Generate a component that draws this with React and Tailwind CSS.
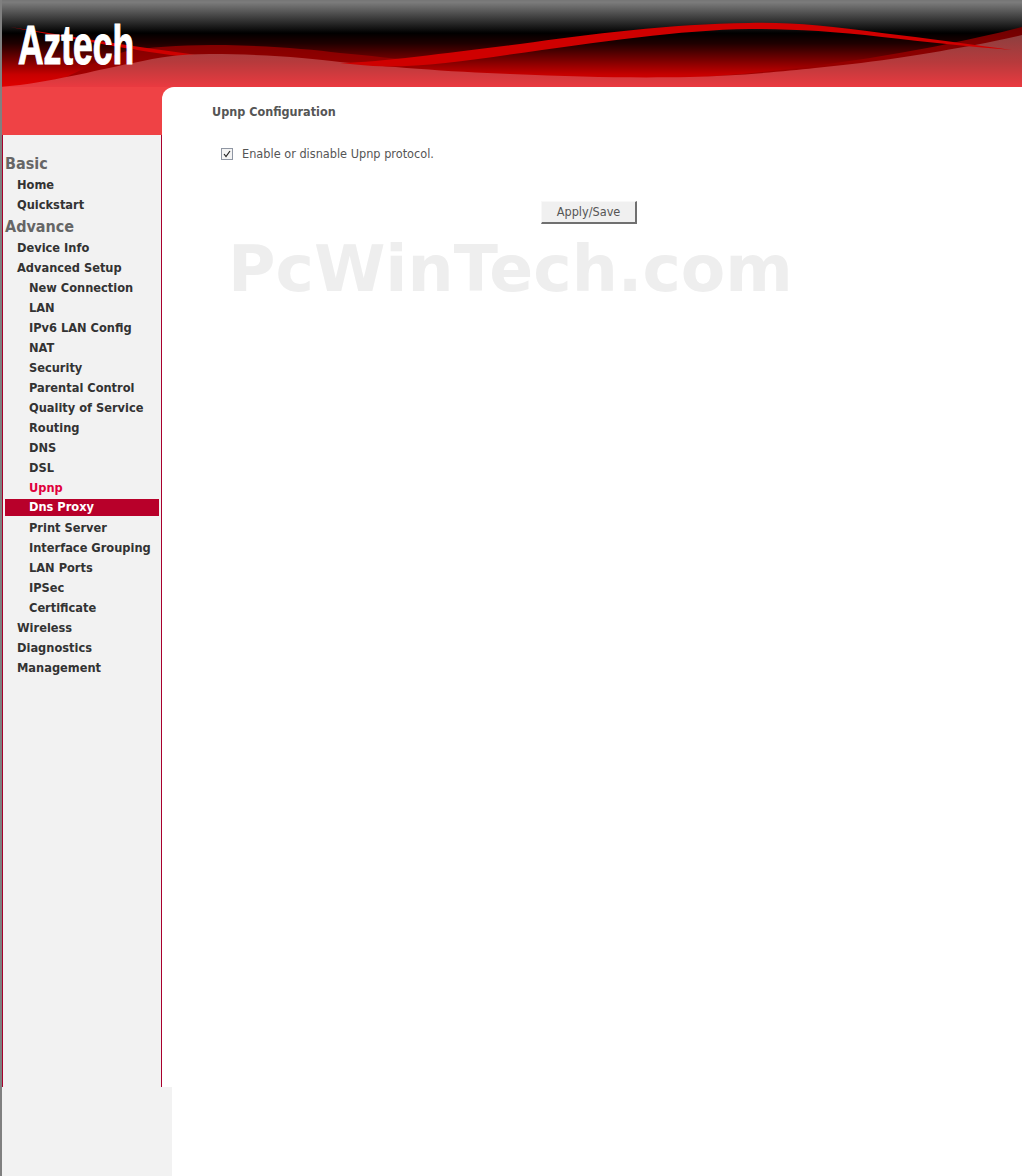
const basicItems = ['Home', 'Quickstart']

const advanceItems = [
  { label: 'Device Info', level: 1 },
  { label: 'Advanced Setup', level: 1 },
  { label: 'New Connection', level: 2 },
  { label: 'LAN', level: 2 },
  { label: 'IPv6 LAN Config', level: 2 },
  { label: 'NAT', level: 2 },
  { label: 'Security', level: 2 },
  { label: 'Parental Control', level: 2 },
  { label: 'Quality of Service', level: 2 },
  { label: 'Routing', level: 2 },
  { label: 'DNS', level: 2 },
  { label: 'DSL', level: 2 },
  { label: 'Upnp', level: 2, visited: true },
  { label: 'Dns Proxy', level: 2, hover: true },
  { label: 'Print Server', level: 2 },
  { label: 'Interface Grouping', level: 2 },
  { label: 'LAN Ports', level: 2 },
  { label: 'IPSec', level: 2 },
  { label: 'Certificate', level: 2 },
  { label: 'Wireless', level: 1 },
  { label: 'Diagnostics', level: 1 },
  { label: 'Management', level: 1 },
]

function HeaderArt() {
  return (
    <svg width="1020" height="87" viewBox="2 0 1020 87" className="block">
      <defs>
        <linearGradient id="sky" x1="0" y1="0" x2="0" y2="1">
          <stop offset="0" stopColor="#858585" />
          <stop offset="0.38" stopColor="#000000" />
          <stop offset="0.5" stopColor="#1f0000" />
          <stop offset="0.86" stopColor="#c80000" />
          <stop offset="1" stopColor="#e00000" />
        </linearGradient>
        <linearGradient id="veil" gradientUnits="userSpaceOnUse" x1="0" y1="33" x2="0" y2="87">
          <stop offset="0" stopColor="#8a4040" />
          <stop offset="0.55" stopColor="#b83a3c" />
          <stop offset="1" stopColor="#ea3a40" />
        </linearGradient>
        <linearGradient id="band" gradientUnits="userSpaceOnUse" x1="0" y1="27" x2="0" y2="80">
          <stop offset="0" stopColor="#6e0000" />
          <stop offset="1" stopColor="#a80000" />
        </linearGradient>
      </defs>
      <rect x="0" y="0" width="1022" height="87" fill="url(#sky)" />
      <rect x="0" y="0" width="1022" height="1.5" fill="#777777" />
      {/* dark bands behind the pale wave */}
      <path d="M60 80 C90 66 110 54 133 50 C160 46 190 45 225 45 C270 46 310 49 340 53 C370 56 395 58 420 62 L420 80 Z" fill="url(#band)" />
      <path d="M690 78 C780 72 900 58 1022 27 L1022 60 L820 80 Z" fill="url(#band)" />
      {/* thin start of the ribbon, goes under the pale wave */}
      <path d="M10 27 C70 36 130 46 190 54 L230 62 C160 56 80 40 10 27 Z" fill="#cf0000" />
      {/* pale wave */}
      <path
        d="M0 87 L20 85 C70 78 110 67 133 63 C160 57 180 54 210 54 C260 54 310 58 340 62 C380 66 450 72 510 74 C580 77 630 78 690 77 C730 76 780 72 815 68 C880 62 930 53 975 45 C990 42 1005 39 1022 35 L1022 87 Z"
        fill="url(#veil)"
      />
      {/* red ribbon */}
      <path
        d="M340 63 C385 62 450 52 520 44 C590 34 670 24 749 23 C790 22 830 26 882 33 C925 38 975 45 1012 50 C975 47 925 42 882 37 C830 31 790 29 749 29 C680 30 600 42 507 55 C460 62 410 68 373 66 C360 65 350 64 340 63 Z"
        fill="#cf0000"
      />
      <text
        x="18"
        y="64"
        fill="#ffffff"
        stroke="#ffffff"
        strokeWidth="1.2"
        fontFamily="'Liberation Sans', sans-serif"
        fontWeight="700"
        fontSize="56"
        textLength="116"
        lengthAdjust="spacingAndGlyphs"
      >
        Aztech
      </text>
    </svg>
  )
}

function MenuLink({ item }) {
  const indent = item.level === 2 ? 'pl-[24px]' : 'pl-[12px]'
  if (item.hover) {
    return (
      <div className="h-5 flex items-center pb-[2px]">
        <div className={`w-[154px] h-[17px] flex items-center bg-[#b8002a] text-white ${indent}`}>{item.label}</div>
      </div>
    )
  }
  return (
    <div className={`h-5 flex items-center ${indent} ${item.visited ? 'text-[#e0003c]' : 'text-[#333333]'}`}>
      {item.label}
    </div>
  )
}

function Sidebar() {
  return (
    <div className="h-[952px] bg-[#f2f2f2] border-l border-r border-[#a8002c] pt-[18px] pl-[2px] text-[12.7px] font-bold">
      <div className="h-[22px] flex items-center text-[16px] text-[#666666]">Basic</div>
      {basicItems.map((label) => (
        <MenuLink key={label} item={{ label, level: 1 }} />
      ))}
      <div className="h-[23px] flex items-center text-[16px] text-[#666666]">Advance</div>
      {advanceItems.map((item) => (
        <MenuLink key={item.label} item={item} />
      ))}
    </div>
  )
}

export default function App() {
  return (
    <div
      className="w-[1022px] h-[1176px] bg-white border-l-2 border-[#808080] flex flex-col overflow-hidden"
      style={{ fontFamily: "'DejaVu Sans', sans-serif", fontStretch: 'condensed' }}
    >
      <HeaderArt />
      <div className="h-[1000px] flex">
        <div className="w-[160px] shrink-0 flex flex-col">
          <div className="h-[48px] bg-[#ef4245]" />
          <Sidebar />
        </div>
        <div className="flex-1 bg-[#ef4245]">
          <div className="relative h-full bg-white rounded-tl-[12px] pl-[50px] pt-[16px]">
            <h1 className="h-[17px] leading-[17px] text-[12.5px] font-bold text-[#555555]">Upnp Configuration</h1>
            <div className="mt-[25px] ml-[9px] flex items-center gap-[9px] h-[18px] text-[12.6px] text-[#555555]">
              <span className="w-[12px] h-[12px] border border-[#8f96a3] bg-[#f4f4f4] flex items-center justify-center">
                <svg width="10" height="10" viewBox="0 0 10 10" fill="none">
                  <path d="M2 5 L4 7.5 L8 2" stroke="#222222" strokeWidth="1.2" />
                </svg>
              </span>
              Enable or disnable Upnp protocol.
            </div>
            <button className="mt-[38px] ml-[329px] w-[96px] h-[23px] block bg-[#f0f0f0] border-t border-l border-[#f8f8f8] border-r-2 border-b-2 border-r-[#707070] border-b-[#707070] text-[12.6px] text-[#555555]">
              Apply/Save
            </button>
            <div
              className="absolute left-[66px] top-[140px] text-[64.8px] leading-[84px] font-bold text-[#eeeeee] whitespace-nowrap select-none"
              style={{ fontStretch: 'normal' }}
            >
              PcWinTech.com
            </div>
          </div>
        </div>
      </div>
      <div className="w-[170px] h-[89px] bg-[#f2f2f2]" />
    </div>
  )
}
